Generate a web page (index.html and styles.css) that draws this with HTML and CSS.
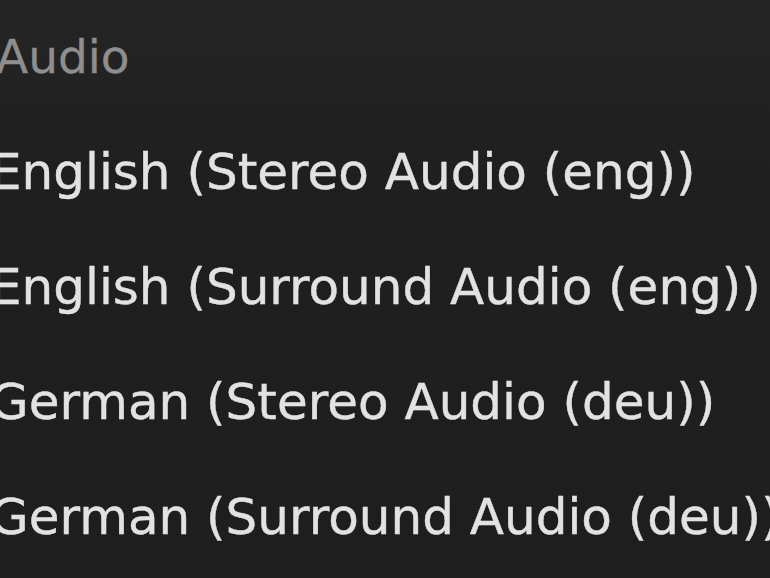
FILE: index.html
```html
<!DOCTYPE html>
<html>
<head>
<meta charset="utf-8">
<link rel="stylesheet" href="styles.css">
</head>
<body>
<div class="menu">
  <div class="heading">Audio</div>
  <ul class="items">
    <li class="item">English (Stereo Audio (eng))</li>
    <li class="item">English (Surround Audio (eng))</li>
    <li class="item">German (Stereo Audio (deu))</li>
    <li class="item">German (Surround Audio (deu))</li>
  </ul>
</div>
</body>
</html>
```
FILE: styles.css
```css
html, body {
  margin: 0;
  padding: 0;
  width: 770px;
  height: 578px;
  overflow: hidden;
  background: linear-gradient(#252525 0%, #1f1f1f 30%, #1e1e1e 100%);
}
.menu {
  font-family: "DejaVu Sans", sans-serif;
  margin-left: -10px;
  white-space: nowrap;
}
.heading {
  color: #8e8e8e;
  font-size: 47px;
  line-height: 113px;
  margin-left: 6px;
  height: 115px;
  -webkit-text-stroke: 0.3px #8e8e8e;
}
.items {
  list-style: none;
  margin: 0;
  padding: 0;
}
.item {
  color: #e2e2e2;
  font-size: 50px;
  line-height: 115px;
  -webkit-text-stroke: 0.4px #e2e2e2;
}
```
